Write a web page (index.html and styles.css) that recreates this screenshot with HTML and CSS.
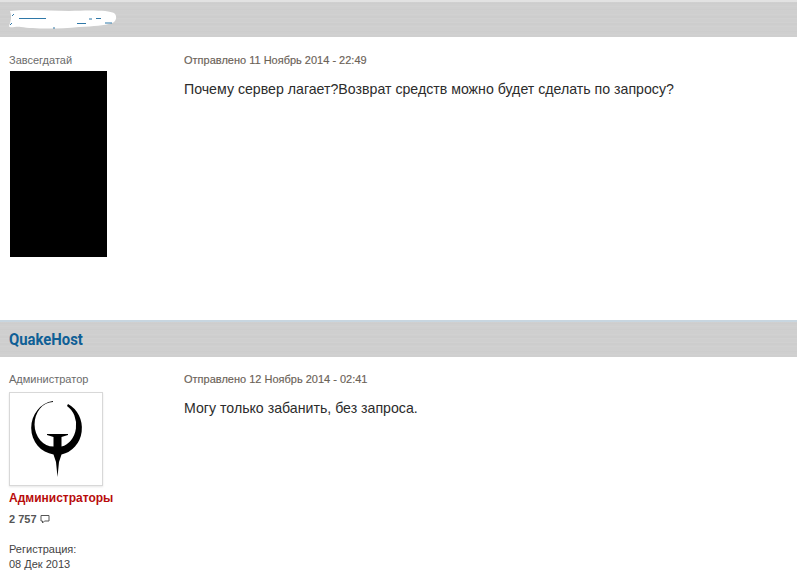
FILE: index.html
```html
<!DOCTYPE html>
<html lang="ru">
<head>
<meta charset="utf-8">
<title>Тема</title>
<link rel="stylesheet" href="styles.css">
</head>
<body>
<article class="post post-first">
  <header class="post-head">
    <svg class="scrub" width="110" height="24" viewBox="0 0 110 24">
      <path d="M1 3 C20 1 40 3 60 3 C80 2 100 2 105 5 C109 8 107 14 103 15 C95 18 85 18 70 19 C50 21 25 21 12 19 C6 18 1 21 0 18 C2 13 3 8 1 3 Z" fill="#fff"/>
      <path d="M10 10.500h27M68 15.500h9M80 11h3M87 10.500h5M96 15h7M1 17l2-2M3 8l2-2M44 20h2" stroke="#2f78a8" stroke-width="1" fill="none"/>
    </svg>
  </header>
  <div class="post-body">
    <aside class="side">
      <div class="rank">Завсегдатай</div>
      <div class="black-avatar"></div>
    </aside>
    <div class="content">
      <div class="date">Отправлено 11 Ноябрь 2014 - 22:49</div>
      <p class="text">Почему сервер лагает?Возврат средств можно будет сделать по запросу?</p>
    </div>
  </div>
</article>
<article class="post post-second">
  <header class="post-head">
    <h3 class="author">QuakeHost</h3>
  </header>
  <div class="post-body">
    <aside class="side">
      <div class="rank">Администратор</div>
      <div class="avatar">
        <svg width="70" height="90" viewBox="0 0 70 90">
          <path d="M32 7 A25.500 27 0 0 0 32.500 60.500 L35 68 L36.500 83 L38 68 L40.500 60.500 A25.500 27 0 0 0 47 10 L46 12 A18.500 22 0 0 1 40.500 52.500 L40.500 43 L47 41 V40 H26 V41 L32.500 43 L32.500 52.500 A18.500 22 0 0 1 32 8 Z" fill="#000"/>
        </svg>
      </div>
      <div class="group">Администраторы</div>
      <div class="posts">2 757
        <svg class="bubble" width="10" height="10" viewBox="0 0 10 10"><path d="M1 1.500h8v5.500h-4.500l-2 2v-2h-1.500z" fill="none" stroke="#555" stroke-width="1"/></svg>
      </div>
      <div class="reg">Регистрация:<br>08 Дек 2013</div>
    </aside>
    <div class="content">
      <div class="date">Отправлено 12 Ноябрь 2014 - 02:41</div>
      <p class="text">Могу только забанить, без запроса.</p>
    </div>
  </div>
</article>
</body>
</html>
```
FILE: styles.css
```css
* { box-sizing: border-box; }
html, body { margin: 0; padding: 0; background: #fff; overflow: hidden; }
body { font-family: "Liberation Sans", Arial, sans-serif; height: 582px; }
.post-head {
  height: 37px;
  background-color: #cfcfcf;
  background-image:
    repeating-linear-gradient(180deg, rgba(255,255,255,.05) 0, rgba(255,255,255,.05) 1px, transparent 1px, transparent 4px),
    repeating-linear-gradient(180deg, rgba(0,0,0,.012) 0, rgba(0,0,0,.012) 2px, transparent 2px, transparent 7px);
  border-top: 2px solid #c8d6e0;
  padding-left: 9px;
  display: flex;
  align-items: center;
}
.author {
  margin: 0;
  font-family: Roboto, sans-serif;
  font-weight: 700;
  font-size: 16.500px;
  color: #0f5f96;
  transform: scaleX(.9);
  transform-origin: left center;
}
.post-first { height: 320px; }
.post-first .post-head { border-top-color: #e2e2e2; }
.post-body { display: flex; padding: 17px 9px 0; }
.post-second .post-body { padding-top: 16px; }
.side { width: 175px; flex: none; }
.rank { font-size: 11px; line-height: 13px; color: #6b6b6b; }
.black-avatar { width: 97px; height: 186px; background: #000; margin: 4px 0 0 1px; }
.avatar {
  width: 94px; height: 94px; margin-top: 6px;
  border: 1px solid #d8d8d8; background: #fff;
  box-shadow: 0 1px 2px rgba(0,0,0,.1);
  display: flex; justify-content: center; align-items: center;
}
.group { font-size: 12px; font-weight: 700; color: #b80c0c; margin-top: 5px; line-height: 15px; }
.posts { font-size: 11px; font-weight: 700; color: #555; margin-top: 6px; line-height: 14px; display: flex; align-items: center; gap: 3px; }
.reg { font-size: 11px; line-height: 15px; color: #444; margin-top: 16px; }
.content { flex: 1; }
.date { font-size: 11px; line-height: 13px; color: #6b6257; -webkit-text-stroke: .15px #6b6257; }
.text { margin: 13px 0 0; font-size: 14.170px; line-height: 18px; color: #2c2c2c; }
```
